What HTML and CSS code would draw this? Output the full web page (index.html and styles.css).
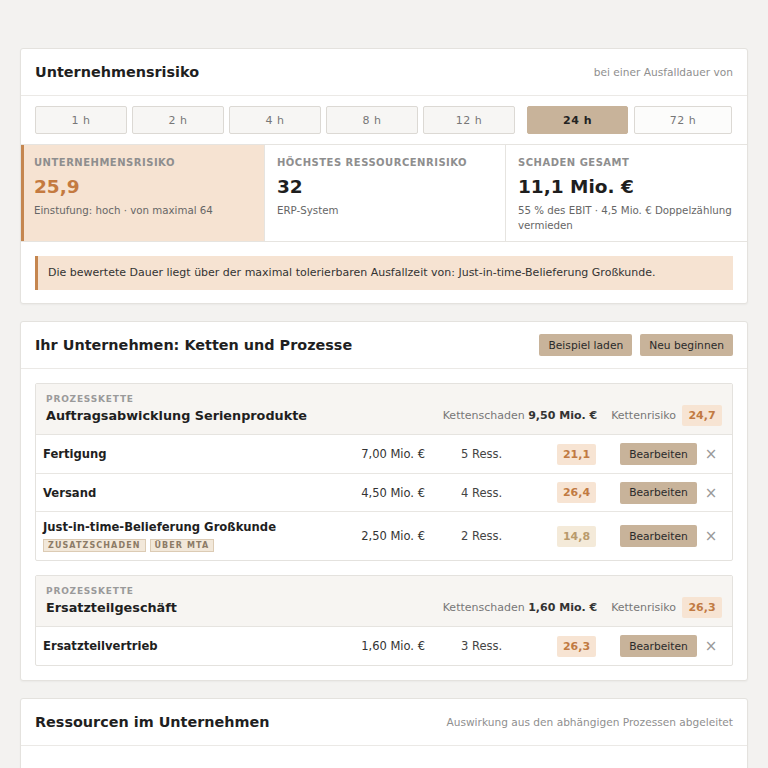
FILE: index.html
```html
<!DOCTYPE html>
<html lang="de">
<head>
<meta charset="utf-8">
<title>Unternehmensrisiko</title>
<link rel="stylesheet" href="styles.css">
</head>
<body>
<main class="page">
  <section class="card">
    <header class="card-head">
      <h2 class="card-title">Unternehmensrisiko</h2>
      <span class="card-note">bei einer Ausfalldauer von</span>
    </header>
    <div class="durations">
      <button class="dur">1 h</button>
      <button class="dur">2 h</button>
      <button class="dur">4 h</button>
      <button class="dur">8 h</button>
      <button class="dur">12 h</button>
      <button class="dur dur-active">24 h</button>
      <button class="dur dur-light">72 h</button>
    </div>
    <div class="metrics">
      <div class="metric metric-hl">
        <div class="metric-label">Unternehmensrisiko</div>
        <div class="metric-value metric-value-hl">25,9</div>
        <div class="metric-sub">Einstufung: hoch · von maximal 64</div>
      </div>
      <div class="metric">
        <div class="metric-label">Höchstes Ressourcenrisiko</div>
        <div class="metric-value">32</div>
        <div class="metric-sub">ERP-System</div>
      </div>
      <div class="metric">
        <div class="metric-label">Schaden gesamt</div>
        <div class="metric-value">11,1 Mio. €</div>
        <div class="metric-sub">55 % des EBIT · 4,5 Mio. € Doppelzählung vermieden</div>
      </div>
    </div>
    <div class="alert-wrap">
      <div class="alert">Die bewertete Dauer liegt über der maximal tolerierbaren Ausfallzeit von: Just-in-time-Belieferung Großkunde.</div>
    </div>
  </section>

  <section class="card">
    <header class="card-head">
      <h2 class="card-title">Ihr Unternehmen: Ketten und Prozesse</h2>
      <div class="head-actions">
        <button class="btn">Beispiel laden</button>
        <button class="btn">Neu beginnen</button>
      </div>
    </header>
    <div class="chains">
      <div class="chain">
        <div class="chain-head">
          <div class="chain-titles">
            <div class="chain-kicker">Prozesskette</div>
            <div class="chain-name">Auftragsabwicklung Serienprodukte</div>
          </div>
          <div class="chain-stats">
            <span>Kettenschaden <b>9,50 Mio. €</b></span>
            <span class="chain-risk">Kettenrisiko <span class="badge badge-strong">24,7</span></span>
          </div>
        </div>
        <div class="proc">
          <div class="proc-name"><div class="proc-title">Fertigung</div></div>
          <div class="proc-amount">7,00 Mio. €</div>
          <div class="proc-res">5 Ress.</div>
          <div class="badge">21,1</div>
          <button class="btn btn-row">Bearbeiten</button>
          <span class="proc-x">×</span>
        </div>
        <div class="proc">
          <div class="proc-name"><div class="proc-title">Versand</div></div>
          <div class="proc-amount">4,50 Mio. €</div>
          <div class="proc-res">4 Ress.</div>
          <div class="badge">26,4</div>
          <button class="btn btn-row">Bearbeiten</button>
          <span class="proc-x">×</span>
        </div>
        <div class="proc proc-tall">
          <div class="proc-name">
            <div class="proc-title">Just-in-time-Belieferung Großkunde</div>
            <div class="tags"><span class="tag">Zusatzschaden</span><span class="tag">Über MTA</span></div>
          </div>
          <div class="proc-amount">2,50 Mio. €</div>
          <div class="proc-res">2 Ress.</div>
          <div class="badge badge-muted">14,8</div>
          <button class="btn btn-row">Bearbeiten</button>
          <span class="proc-x">×</span>
        </div>
      </div>

      <div class="chain">
        <div class="chain-head">
          <div class="chain-titles">
            <div class="chain-kicker">Prozesskette</div>
            <div class="chain-name">Ersatzteilgeschäft</div>
          </div>
          <div class="chain-stats">
            <span>Kettenschaden <b>1,60 Mio. €</b></span>
            <span class="chain-risk">Kettenrisiko <span class="badge badge-strong">26,3</span></span>
          </div>
        </div>
        <div class="proc">
          <div class="proc-name"><div class="proc-title">Ersatzteilvertrieb</div></div>
          <div class="proc-amount">1,60 Mio. €</div>
          <div class="proc-res">3 Ress.</div>
          <div class="badge">26,3</div>
          <button class="btn btn-row">Bearbeiten</button>
          <span class="proc-x">×</span>
        </div>
      </div>
    </div>
  </section>

  <section class="card">
    <header class="card-head">
      <h2 class="card-title">Ressourcen im Unternehmen</h2>
      <span class="card-note">Auswirkung aus den abhängigen Prozessen abgeleitet</span>
    </header>
    <div class="card-body-empty"></div>
  </section>
</main>
</body>
</html>
```

FILE: styles.css
```css
* { box-sizing: border-box; }

html, body {
  margin: 0;
  padding: 0;
}

body {
  background: #f3f2f0;
  font-family: "DejaVu Sans", "Liberation Sans", sans-serif;
  color: #222;
}

.page {
  padding: 48px 20px 40px 20px;
  display: flex;
  flex-direction: column;
  gap: 17px;
}

.card {
  background: #fff;
  border: 1px solid #e4e2de;
  border-radius: 3px;
  box-shadow: 0 1px 2px rgba(0,0,0,0.04);
}

.card-head {
  height: 47px;
  padding: 0 14px 0 14px;
  display: flex;
  align-items: center;
  justify-content: space-between;
  border-bottom: 1px solid #ebe9e6;
}

.card-title {
  margin: 0;
  font-size: 14.4px;
  font-weight: bold;
  color: #1f1f1f;
}

.card-note {
  font-size: 10.6px;
  color: #8f8f8f;
}

.durations {
  display: flex;
  gap: 5px;
  padding: 10px 14px 10px 14px;
}

.dur {
  width: 92px;
  height: 28px;
  border: 1px solid #dcd9d4;
  background: #f7f6f4;
  border-radius: 2px;
  font-family: inherit;
  font-size: 11px;
  color: #777;
  letter-spacing: 0.5px;
  padding: 0;
}

.dur-active {
  width: 101px;
  margin-left: 7px;
  background: #c8b39a;
  border-color: #c8b39a;
  color: #222;
  font-weight: bold;
}

.dur-light {
  width: 98px;
  margin-left: 1px;
  background: #fcfcfb;
}

.metrics {
  display: grid;
  grid-template-columns: 243px 241px 1fr;
  border-top: 1px solid #e6e4e0;
  border-bottom: 1px solid #e6e4e0;
}

.metric {
  padding: 11px 12px 8px 12px;
  min-height: 94px;
  border-left: 1px solid #e6e4e0;
}

.metric-hl {
  background: #f6e3d2;
  padding-left: 10px;
}

.metric.metric-hl { border-left: 3px solid #c5864f; }

.metric-label {
  font-size: 10px;
  font-weight: bold;
  letter-spacing: 0.5px;
  text-transform: uppercase;
  color: #8e8e8e;
  line-height: 14px;
}

.metric-value {
  font-size: 18.5px;
  font-weight: bold;
  line-height: 26px;
  margin-top: 4px;
  color: #1e1e1e;
}

.metric-value-hl { color: #c47a40; }

.metric-sub {
  font-size: 10.25px;
  color: #666;
  line-height: 15px;
  margin-top: 3px;
}

.alert-wrap {
  padding: 14px 14px 13px 14px;
}

.alert {
  background: #f6e3d2;
  border-left: 3px solid #c5864f;
  padding: 9px 10px;
  font-size: 11px;
  line-height: 16px;
  color: #333;
}

.head-actions {
  display: flex;
  gap: 8px;
}

.btn {
  height: 22px;
  padding: 0 9px;
  border: none;
  border-radius: 2px;
  background: #c8b39a;
  font-family: inherit;
  font-size: 10.7px;
  color: #2a2a2a;
}

.chains {
  padding: 14px 14px 14px 14px;
  display: flex;
  flex-direction: column;
  gap: 14px;
}

.chain {
  border: 1px solid #e4e2de;
  border-radius: 2px;
}

.chain-head {
  background: #f7f5f2;
  padding: 9px 10px 8px 10px;
  display: flex;
  justify-content: space-between;
  align-items: flex-end;
  border-bottom: 1px solid #e6e4e0;
}

.chain-kicker {
  font-size: 9px;
  font-weight: bold;
  letter-spacing: 0.8px;
  text-transform: uppercase;
  color: #9a9a9a;
  line-height: 13px;
}

.chain-name {
  font-size: 12.8px;
  font-weight: bold;
  color: #1f1f1f;
  line-height: 20px;
}

.chain-stats {
  display: flex;
  align-items: center;
  gap: 14px;
  font-size: 11px;
  color: #777;
}

.chain-stats b { color: #333; }

.chain-risk {
  display: flex;
  align-items: center;
  gap: 6px;
}

.badge {
  display: inline-flex;
  align-items: center;
  justify-content: center;
  width: 39px;
  height: 21px;
  background: #f7e4d3;
  color: #c17a42;
  font-size: 11px;
  font-weight: bold;
  border-radius: 2px;
}

.badge-strong { width: 40px; }

.badge-muted {
  background: #f4ead9;
  color: #b99a6c;
}

.proc {
  display: flex;
  align-items: center;
  min-height: 38px;
  padding: 0 7px 0 7px;
  border-top: 1px solid #e8e6e2;
}

.chain-head + .proc { border-top: none; }

.proc-tall { min-height: 49px; }

.proc-name {
  flex: 1;
}

.proc-title {
  font-size: 11.6px;
  font-weight: bold;
  color: #1f1f1f;
}

.tags {
  display: flex;
  gap: 4px;
  margin-top: 5px;
}

.tag {
  font-size: 8px;
  font-weight: bold;
  letter-spacing: 1.1px;
  text-transform: uppercase;
  color: #8c7b66;
  background: #f2e8da;
  border: 1px solid #dccbb4;
  padding: 1px 4px 0 4px;
  line-height: 10px;
}

.proc-amount {
  width: 110px;
  text-align: right;
  font-size: 11.5px;
  color: #333;
}

.proc-res {
  width: 96px;
  margin-left: 36px;
  font-size: 11.5px;
  color: #444;
}

.btn-row {
  margin-left: 24px;
  width: 77px;
  padding: 0;
}

.proc-x {
  width: 28px;
  text-align: center;
  font-size: 15px;
  color: #999;
}

.card-body-empty {
  height: 40px;
}
```
